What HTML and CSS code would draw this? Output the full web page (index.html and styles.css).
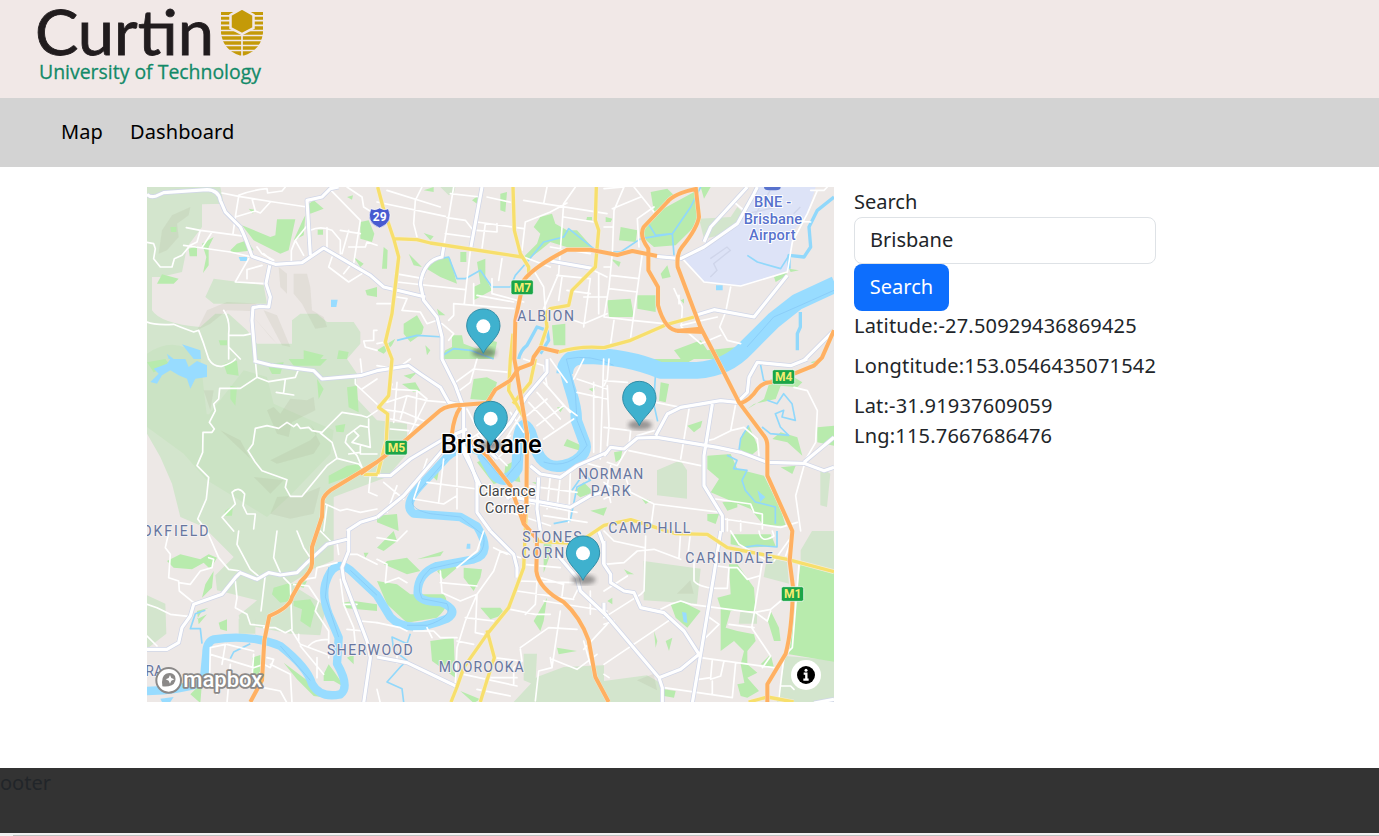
FILE: index.html
```html
<!DOCTYPE html>
<html lang="en">
<head>
<meta charset="utf-8">
<title>Map</title>
<link rel="stylesheet" href="styles.css">
</head>
<body>
<header class="brand">
<svg class="logo" viewBox="0 0 240 90" role="img" aria-label="Curtin University of Technology">
<text class="logo-name" x="3" y="55" textLength="179" lengthAdjust="spacingAndGlyphs">Curtin</text>
<text class="logo-sub" x="7" y="79" textLength="222" lengthAdjust="spacingAndGlyphs">University of Technology</text>
<g class="crest">
<path d="M189 12H231V33Q229 50 212 55.500H208Q191 50 189 33Z"/>
<path class="crest-gap" d="M188 15.800H232M188 20.600H232M188 25.400H232M188 30.500H232M188 35.500H232M188 40.500H232M188 45.500H232M188 50.500H232M210 32V56"/>
<path class="crest-hex" d="M210 8.500L221.500 15V28L210 34L198.500 28V15Z"/>
</g>
</svg>
</header>
<nav class="menu"><a>Map</a><a>Dashboard</a></nav>
<main class="content">
<svg class="map" viewBox="0 0 2061 1545">
<defs>
<g id="major">
<path d="M0 22Q10 32 25 28L50 17 180 8Q215 10 220 40L235 75 280 120Q295 150 315 208L385 232 465 227 530 183 610 230 670 265 710 300 835 330"/>
<path d="M368 235L357 290 370 330 365 360 340 358 318 362 315 400 325 521M490 205L480 40 525 30 550 5 575 0"/>
<path d="M1005 0L970 190M890 180L885 210Q830 220 820 290L830 340 870 390 885 450 885 516 925 596 945 650M1210 222L1340 245"/>
<g transform="translate(1371 0)"><path d="M155 208L230 215 300 180 400 110 450 20 460 0M300 165L320 120 430 0M275 385L330 368 450 390 550 265M600 520L690 430"/></g>
<g transform="translate(0 516)"><path d="M320 5L370 18 500 35 525 60 640 50 690 35 785 20 820 45 880 85 905 130 950 140 950 260 970 310 990 370 990 460 1030 516M600 516L640 490 690 475"/></g>
<g transform="translate(690 516)"><path d="M0 350H40L100 300 200 240 270 210M0 475L80 410 200 270M460 320L490 345 550 355 600 320 690 280M510 0V40L450 110 400 190 330 270 360 300M385 410L580 445 640 410 690 395M485 355L480 450 490 516M235 230L310 380M390 420L420 390"/></g>
<g transform="translate(1371 516)"><path d="M0 290L20 265 60 270 100 237 160 235 340 265 410 280 490 310 600 313 660 335 690 325M155 230L190 165 230 145 350 125 400 130 430 100 435 55 460 10 560 20 610 0M325 135L300 290V380L355 470V520M600 310L690 235"/></g>
<g transform="translate(0 1032)"><path d="M0 355H60L95 335 105 290 130 255 140 220 225 190 265 140 280 125 330 145 365 125 400 132 450 125 480 95 540 40 600 25M605 0V60L585 110 590 145 660 330 670 380 650 516"/></g>
<g transform="translate(690 1032)"><path d="M340 0L410 70 420 110V140M0 378L90 395 230 462 245 470M540 70L600 140 610 180 690 255M665 0L680 40V100"/></g>
<g transform="translate(1371 1032)"><path d="M350 0L330 130 290 370 265 516M0 30V100L20 130V155L60 180 90 185 110 230 180 245 240 300 285 370 230 415 165 440M0 245L165 440 175 470V516M0 215V245M630 516L690 505"/></g>
</g>
<g id="yellow">
<path d="M692 0L708 60 740 155 810 158 850 168 1125 210M740 155L755 210 735 380 715 465 735 516 725 626 695 661 722 681 718 760 692 861M1098 0L1102 130 1120 200 1145 240V270M1348 0L1345 100 1355 130 1345 240 1275 310 1265 355 1210 365 1195 380 1200 420 1180 480M1235 495Q1300 475 1371 482L1451 460 1561 412 1641 390M1098 440L1090 516 1085 610 1130 690M1165 516L1150 586 1098 650M650 862H692"/>
<path d="M1142 740L1138 960 1130 1142 1085 1262 1020 1342 950 1442 930 1500 912 1545M1020 1330L1042 1412 1020 1480 1000 1545M1160 1062L1290 1070 1371 1015 1451 998 1586 1040 1681 1042 1741 1082 1921 1117 2061 1154M1805 1545L1861 1530 1940 1545"/>
</g>
<g id="orange">
<path d="M310 1545L345 1480 352 1360 367 1287Q430 1260 435 1230L460 1185Q495 1150 495 1130V1080L525 990 527 940Q530 925 550 910L690 825M640 861L690 825 715 806 780 756 880 670Q900 654 950 653L1020 648 1045 608 1090 580 1115 545 1155 530 1160 510 1180 482 1235 495M940 661Q920 690 915 740"/>
<path d="M1138 960L1140 740 1130 680 1110 560 1102 516 1105 400 1130 280Q1160 240 1260 188L1330 188 1411 204 1456 192 1530 207M965 756L1020 806 1090 896 1130 1010 1150 1032M1138 950L1130 1010 1170 1056 1168 1152Q1175 1205 1250 1245Q1300 1290 1325 1360L1345 1470 1385 1545"/>
<path d="M1646 0L1656 90Q1650 125 1605 180Q1588 200 1592 240L1660 420 1710 516 1776 646 1850 745Q1862 760 1861 780V866L1936 1032 1928 1122 1938 1200Q1935 1330 1916 1400L1861 1492V1545M1651 5Q1580 20 1561 45L1490 120Q1475 145 1504 185V250L1533 300V355Q1555 435 1600 432L1671 435M1590 432L1660 425M1776 651Q1810 640 1831 606Q1850 585 1871 586L1951 556 2001 536 2025 512 2061 430"/>
</g>
<g id="pin">
<ellipse class="pin-shadow" cx="2" cy="-2" rx="36" ry="15"/>
<path class="pin-body" d="M0 0C-10-25-50-49-50-82C-50-113-27-133 0-133S50-113 50-82C50-49 10-25 0 0Z"/>
<circle class="pin-dot" cx="0" cy="-81" r="21"/>
</g>
<filter id="soft"><feGaussianBlur stdDeviation="7"/></filter>
</defs>
<rect class="land" width="2061" height="1545"/>
<g class="hill">
<path d="M0 0H220L230 50 165 52V120L120 180 105 255 40 270H15V370Q40 410 160 420L205 380 245 380 300 430 330 470H435V400L460 380H510L540 405H620L640 435V470L600 516 630 560 625 630 690 700 780 710V800L720 870 560 930 560 1120 500 1145 430 1190 540 1260 530 1290 520 1345 430 1340 280 1310 275 1285 330 1240 210 1210 205 1165 260 1110 170 1020 100 990 75 890 40 810 0 740V516 280Z"/>
<path d="M200 275L350 295 360 350 200 350 175 330ZM0 1225L55 1250 58 1340 0 1385ZM275 1295H325V1340H275ZM1656 95L1751 90 1771 60 1791 80 1741 140 1671 155ZM1490 1122L1661 1145 1650 1250 1490 1240ZM1530 850L1600 820 1620 850V935L1530 925ZM1961 1090L1995 1032H2061V1154L1961 1135ZM1371 1482L1500 1465 1545 1490 1545 1545H1371ZM1100 1545L1170 1470 1250 1440 1371 1435V1545ZM1860 1110L1920 1125 1926 1190 1850 1170ZM1916 1407L2061 1420V1545H1890ZM1130 1400L1170 1400 1165 1495 1130 1480ZM880 0H925L920 20 905 25ZM1780 1275H1830V1310H1775ZM2020 840L2050 860 2040 960 2020 955Z"/>
</g>
<path class="forest" d="M0 500Q90 440 160 516L180 690 290 550 360 570 380 650 560 730 550 800 430 925 360 990 180 880 110 800 0 720ZM170 680L320 700 310 790 430 930 250 900 160 850Z"/>
<path class="shade" d="M35 200L45 130 75 85 130 60 125 85 90 110 95 150 60 190ZM150 430L180 370 240 345 330 350 310 372 240 370 190 410ZM440 260H480L490 300 495 370 530 390 540 420 505 425 465 350 440 320ZM350 370L390 385 430 480 405 475 360 390ZM320 390L390 470 370 450ZM395 240L420 260 420 320 400 300ZM360 670L380 660 400 680 430 635 480 640 500 630 505 670 435 705 425 750 390 740ZM220 730L280 760 310 815ZM370 820L490 760 510 740 490 710 520 770 500 800 390 830ZM320 870L410 880 370 920ZM390 930L460 925 520 900 500 980 430 995 370 980ZM1971 1300L2030 1320 2061 1350 1990 1345ZM1590 1220L1630 1180 1640 1220ZM1470 1480L1520 1460 1530 1510ZM170 610L200 610 190 670Z"/>
<path class="airport" d="M1611 215L1691 165 1771 105 1826 20V0H2006L1981 80 1941 130 1926 250 1781 297 1671 285Z"/>
<path class="runway" d="M1690 215L1740 180 1750 190 1700 230 1710 250 1690 270M1820 90L1870 10M1800 80L1890 60M1940 80L1960 60"/>
<g class="park">
<path d="M390 97H445L440 120 425 190 400 200 320 160 285 115 370 150 385 145ZM480 55L500 40 530 65 490 80ZM640 105L665 100 682 140 675 165 640 155ZM250 190L270 170 300 160 320 190 255 197ZM125 185L150 178V208H128ZM30 290L45 262 95 275 80 290ZM655 310L690 300V330L660 325ZM620 210L650 230 640 240ZM70 120H88V135H72ZM305 65L322 68 318 80ZM165 170L200 150 185 180 185 235 168 258 178 210ZM215 460L240 460 240 475H220ZM467 100L475 85 470 145 440 160ZM512 128H528V143H512ZM600 30L618 25 615 38ZM575 490L605 495 600 516H570ZM470 490L530 505 520 516H470Z"/>
<g transform="translate(690 0)"><path d="M370 20L390 15 385 75 370 70ZM470 120L490 90 525 80 535 110 570 130 600 130 650 185 600 190 520 165 490 190 450 220 440 210 480 170 490 140ZM300 225L325 215V270L345 310 290 340V300L310 290ZM80 410L120 385 140 420 135 440 100 465 80 440ZM95 200L135 240 110 235ZM525 415L565 410V475H530ZM190 516L205 490 225 480 225 445 255 445 260 470 300 485 340 460 360 465 350 516ZM20 180L32 190 30 245 15 245ZM140 240L190 205 220 215 240 290 190 270ZM140 10L170 0V15ZM285 40L305 25 300 50ZM140 138L170 148 160 160ZM250 195L268 195V225H250ZM180 365L205 385 185 385ZM0 490L55 455 45 475 20 500ZM145 475L160 490 150 505ZM630 90H645V100H628Z"/></g>
<g transform="translate(1371 0)"><path d="M110 130L160 75 270 15 285 50 280 110 215 175 150 180 115 150ZM140 15L190 5 210 25 150 75ZM50 120L100 130 95 165 45 160ZM170 260L190 235 200 270 175 275ZM10 340L80 335 90 390 15 390ZM100 325H155V375L100 365ZM210 490L290 460 310 490 400 480 420 490 400 516H230ZM510 270L545 255 550 265 515 285ZM555 245L585 250 560 255ZM290 0H320L300 35ZM20 215L50 225 45 240ZM5 90L25 95 20 105H5ZM230 340L240 335V350Z"/></g>
<g transform="translate(0 516)"><path d="M230 15L270 5 275 50 240 45ZM360 15L410 10 400 45 375 45ZM0 10L55 0 70 20 20 40ZM600 85L630 80 635 160 605 145ZM565 200L595 195 590 220 568 218ZM545 350L600 320 640 315 640 340 545 375ZM425 0H540L520 20H440ZM510 60L530 90 515 120ZM250 80L270 85 265 140 250 120ZM235 455L258 440 255 470H230Z"/></g>
<g transform="translate(690 516)"><path d="M290 60L330 55 360 70 345 125 280 120ZM75 75L115 70 130 95 110 100ZM420 300L430 370 380 360 385 320ZM570 240L615 260 610 275 560 260ZM300 310L320 300 370 370 350 375ZM540 145L560 145 550 160ZM465 370L490 370 485 380ZM160 345L185 340 180 365ZM640 455L690 445 680 470ZM0 470L60 465 65 516 0 490ZM590 400L620 370 650 400 610 415ZM80 50L120 40 100 60ZM635 90L655 85 650 100Z"/></g>
<g transform="translate(1371 516)"><path d="M90 0H270Q240 20 200 20ZM170 70L195 75 185 130 165 125ZM430 150L480 120 500 60 570 55 595 70 580 85 530 80 515 120 450 135ZM415 225L435 200 465 270 440 290 405 270ZM530 220L580 235 595 290 550 250 505 240ZM310 290L380 285 400 330 480 350 530 450 545 500 480 500 440 450 390 430 320 400 345 360 310 330ZM640 205L690 200V260L640 250ZM30 280L55 275 50 300 35 310ZM310 465H345L335 495 310 485ZM250 200L295 185 290 205 270 220ZM355 430L400 425V445L370 455ZM40 0H60L50 10ZM530 325L575 320 565 345ZM110 415L140 425 125 435ZM620 10L650 0 640 20Z"/></g>
<g transform="translate(0 1032)"><path d="M60 90L100 70 160 85 185 70 210 80 190 115 170 95 135 115 80 110ZM380 170L430 155 430 210 400 215 375 190ZM440 210L490 205 505 230 490 290 460 270 465 235 440 225ZM430 160L480 150 470 170ZM530 430L545 400 560 420 595 470 560 450 530 450ZM315 380L340 372 340 420 320 445ZM410 395L510 470 540 500 500 495 450 445ZM155 280L180 250 150 265 165 240 185 230 150 240ZM215 275L240 265V300L220 295ZM585 215L620 210 690 220V240L600 232ZM650 65L665 65 655 80ZM175 160L200 120 195 170 165 200ZM130 490L165 455 160 516ZM600 380L620 370V400Z"/></g>
<g transform="translate(690 1032)"><path d="M0 150L60 160 100 190 200 190Q225 220 180 260L90 275 30 220ZM30 90L90 80 130 120 90 130 45 110 20 100ZM180 120L220 100 240 110 200 145ZM260 110L315 115 310 140 290 180 260 140ZM160 330L230 320 235 440 165 390ZM310 230L370 230 385 250 340 265ZM470 270L510 200 500 270 490 300ZM500 40L525 30 520 70 500 125ZM0 50L50 0 60 30 20 60ZM540 350L600 360 545 370ZM120 85L200 60 190 75ZM250 480L310 505 290 516Z"/></g>
<g transform="translate(1371 1032)"><path d="M590 95L690 120V392L555 370ZM340 200L380 190 375 100 400 100 450 170 455 240 380 240 365 290 400 300 450 310 455 330 430 360 430 400 460 425 430 440 465 480 430 500 410 400 420 360 390 330 350 360V230ZM200 220L230 210 290 240 250 290 215 260ZM380 10H500L515 45 430 50 380 40ZM500 240L525 290 530 330 510 330 490 265ZM150 300L155 350 160 330ZM185 330L205 320 195 360ZM180 475L215 480 210 500 180 495ZM60 115L90 130 70 130ZM10 210L25 200V220ZM470 400L500 370 510 410ZM400 460L425 455 430 500 410 495Z"/></g>
</g>
<g class="lake">
<path d="M275 210H300V222H280ZM552 338H572L568 360H552ZM105 472L160 490 162 516H140ZM60 500L80 516H65ZM10 585L35 560 20 545 60 530 70 516H115L125 540 150 522 180 535V570L145 575 130 605 120 575 95 565 70 550 45 565 30 590ZM1707 295H1727V310H1707ZM1605 1275L1618 1277 1621 1308 1610 1305ZM1831 910L1855 930 1840 945ZM960 1070H970V1085H958ZM40 1535L80 1530 70 1545H45Z"/>
</g>
<g class="creek">
<path d="M880 215L905 210 930 275 955 275 1000 250 1035 300H1090L1105 265 1140 225 1190 165 1250 150 1265 125 1340 185M750 460L810 445 890 450M880 510L920 485 970 490 1040 516M1661 0L1631 60 1576 140 1581 205M1501 105L1526 145 1576 140 1481 155 1421 195H1371M1525 570L1520 650 1532 703"/>
<path class="wide" d="M1926 245L1926 205 1971 210 1991 180 1986 120 2011 70 2061 30M1115 516Q1120 490 1140 475L1170 420 1200 430 1205 460 1180 500M1960 375V420L1951 440 1951 490"/>
<path d="M1801 205L1831 225 1901 245 1926 205M1805 715L1781 755 1776 790M1740 805L1770 820 1760 845 1800 850 1785 880 1795 910 1825 945 1885 960 1885 1010M1861 640L1890 650 1910 620 1935 650 1945 700 1905 690 1910 670 1885 680 1900 720 1925 745 1870 740 1845 720M1840 530L1850 580 1880 590M790 1340L780 1370 735 1350 740 1390 780 1420 760 1440 720 1485 765 1505 770 1545M165 1370L160 1325 130 1325 145 1280 175 1270M250 1415L260 1395 310 1370M1795 1080L1830 1075 1890 1080 1890 1032M1275 910L1310 860 1330 880 1290 900 1270 1000 1220 1010"/>
</g>
<g class="river">
<path class="estuary" d="M2065 292L1950 345 1880 400 1800 480Q1740 545 1650 550L1540 550Q1440 508 1310 506Q1255 510 1253 560"/>
<path class="reach" d="M1253 535C1260 600 1290 640 1288 700L1310 760Q1330 800 1270 830Q1190 860 1165 780L1150 735Q1125 690 1115 750L1110 845Q1080 900 1040 860L1005 800"/>
<path class="stream" d="M1030 850L1005 800Q960 760 900 810L845 870Q760 950 800 980L940 990 990 1018Q1040 1100 980 1117L870 1137Q810 1160 812 1220Q820 1245 880 1245Q940 1270 900 1295Q780 1345 730 1290L690 1225 610 1150Q560 1110 535 1190Q525 1230 545 1282L575 1352 570 1430Q610 1500 580 1522Q520 1535 495 1490Q480 1440 400 1377Q310 1340 200 1357Q178 1365 178 1400L170 1485Q100 1510 0 1512"/>
<path class="channel" d="M2061 310L1960 355 1880 390 1800 480M1400 535Q1330 500 1258 516L1285 620 1290 700 1320 775Q1270 850 1190 825M1145 730Q1125 750 1120 820L1070 880 1000 800M900 815L800 930Q780 965 850 980L940 990 1010 1045Q1020 1110 950 1122L850 1145Q800 1190 825 1235L900 1250Q920 1290 840 1315L780 1315M690 1225L610 1150M545 1140L535 1230 575 1350M490 1480L400 1377"/>
</g>
<g class="minor">
<path d="M118 122L160 130 295 148M110 175L145 180 250 195 315 210M160 130L150 165 130 175 105 205 82 215 75 240H40L20 215 25 185 20 170 0 166M195 135L165 182M225 18L275 28 380 45 480 60M275 28L265 90 258 140M315 35L325 72 340 78 370 45M265 90L325 72M275 25Q310 10 360 5L362 18 405 12 415 0M550 8L640 100M600 0L645 30 650 60 690 85M485 110L445 160 470 205M445 160L433 190V222M490 130Q520 115 555 130L580 160V200M540 122V185M555 210L545 240 605 285 645 260M605 130L585 200M640 100L620 230M580 130L640 140M605 180H655L660 165 690 175M350 200L385 230M330 180L345 200 380 220M610 235L590 260M305 215L265 285 355 290M345 235L300 248V275M0 405Q20 415 80 412L100 420 140 435 155 430 170 470 185 516M230 370Q250 400 245 440V516M247 445L290 445 315 440M245 480L280 516M690 430H680V460L650 462 655 480 690 490"/>
<g transform="translate(690 0)"><path d="M0 45L205 88M30 10L190 60M135 0L115 40 110 110 120 150M230 0L200 180M330 30L410 48M210 92L265 100 285 125M205 140L280 150M300 105L440 125M325 110L315 185M360 110V135L300 130M440 40L500 50 690 80M445 105L435 190M445 105L520 75 570 48M595 0L560 50 545 260 500 365M560 90L650 105M520 180L640 200M375 215L365 280M280 190L262 350M345 275V320L440 345M55 260L140 275M60 285L265 308M300 325L410 345M230 350L410 365M230 350V385L215 400M290 290V350M60 330L90 335 75 370 130 375 150 410 180 400M195 410L230 440 215 460M540 265L640 275M640 245L690 270M665 260V380M640 275L620 420M555 270L545 340M620 330H690M590 400L620 410 690 380M470 250L500 300 505 370M0 350H45M0 470L25 465M440 210L520 240M570 310L640 320M220 20L310 30M510 0L500 50"/></g>
<g transform="translate(1371 0)"><path d="M60 0L30 70 25 200 15 300 0 390M0 5L60 0M90 0L150 75M150 60L100 95 105 180M25 65L110 30M0 120H25M0 240H20M20 265L105 275M115 200L80 450M15 305L100 315M0 390L85 400 180 410M30 400L20 470M240 220L300 285 410 297 550 255 565 165 610 80 640 10M210 305L235 360 232 420 290 470 350 445M380 300L365 375 347 420 370 460 410 470M230 415L340 390M570 100L620 105M620 10H660L670 0M390 45L425 75M225 325V350"/></g>
<g transform="translate(0 516)"><path d="M185 0Q200 25 225 22Q260 10 265 0M325 5L330 55 365 68 445 55 455 30M415 60L410 100M388 100L440 108M330 55L280 88H218L215 120 200 135 205 155 187 190 202 210 195 220H168L167 280 150 320 185 355 178 420 152 480 180 516M625 60V75L690 135M645 90L690 60M640 0L645 45M690 155L660 175 645 170 585 160 550 195 525 220 495 215 485 205 460 208 450 195 440 203 420 190 395 208 360 200 325 208 318 255 303 275 325 310 345 335 420 362 415 385 430 412H465L540 320 570 298 555 250 520 222M570 298L635 315 645 325 630 290 595 250 600 230 640 200 665 205V180M620 215L635 230 615 250 670 265 665 205M640 260V285H690M605 285L640 280M535 435L580 455 600 450 640 460 690 450M670 350L665 400 690 410M255 400Q275 380 293 405L288 440 300 465H325L320 510M255 400L265 435 225 475 260 516M540 440L530 516"/></g>
<g transform="translate(690 516)"><path d="M45 75L30 130 90 110 150 125 210 130M35 90L120 95 150 120 90 240M10 150L80 160 150 190M40 180L130 200M40 210L95 215M60 70L50 190M90 110L70 180M120 95L115 190M0 20L60 30 100 0M235 70L290 30 400 40M240 100L280 70 300 0M440 0L500 20 510 80 560 140 600 170M455 130L530 210M480 100L550 180M500 70L580 160M450 170L510 120M480 200L560 140M500 240L590 180M520 0L570 70M270 150L350 300M280 240L340 200M340 290L400 230M360 300L420 240M380 250L430 170M300 230L390 320M400 160L440 220M150 300L110 420 200 435 240 410M150 370L300 390M200 300L185 430M240 280L240 450M20 370L80 420M60 380L30 460M460 420L580 440M450 430L600 460M450 380L600 400M520 350L510 450M550 350L540 450M580 340L575 490M500 470L630 490M600 100L690 120M620 0L590 60M650 70V280M620 310L690 330M600 60L690 90M680 0L670 300M400 460L520 500"/></g>
<g transform="translate(1371 516)"><path d="M15 0L10 60 0 80M0 65L70 70M10 80L15 200 10 260M0 205L80 215 75 260M155 130L230 145M255 150L230 300M395 135L380 215 330 240 310 245M380 215L420 205 460 240 465 290M75 260L40 320 10 310M75 275L290 320M20 320L10 380 20 430M60 340L80 400 150 435 350 460M150 435L140 510M40 400L0 420M570 85L610 95 640 155 635 250 600 310M600 320L575 410 590 516M335 420L440 435 450 460 475 465V510M370 480V516M410 485V516M360 480L530 505 580 490M0 370L40 400M100 230L150 215"/></g>
<g transform="translate(0 1032)"><path d="M180 0L215 80 245 115 280 120M275 0L270 40 310 115 340 140M355 130L342 240M390 0L380 80 400 125M450 0L470 50 490 80M520 0L550 30M65 5L55 50 70 70 65 140 95 150 97 180 140 215M95 155L130 160 160 120 195 110 200 85 185 80M0 220L30 230 70 250 130 257M265 150L270 200 265 230 300 250 310 280 355 285M350 290L385 290 415 305 435 295 430 160 410 140M440 160L485 165 515 210 505 240 545 300 545 380M470 145L505 140 510 110 570 95M600 30V70H630L690 100M570 35L575 70M435 300L460 340 540 370M485 345Q500 325 545 325M455 310V330M460 345L530 430M240 340L320 360M190 350L235 340 225 400M190 370L320 410 350 400M190 350L188 440 230 455M320 370L315 440M350 400L370 410 380 385 360 380M370 400L430 430 435 516M350 470L400 480 420 516M250 400L240 516M580 145L590 220 620 290 625 340M590 220L630 220M640 270L690 275M600 295L650 300M640 340L690 350M0 315L30 345M200 460L210 490M510 380V440"/></g>
<g transform="translate(690 1032)"><path d="M0 20L60 30 90 0M0 85L30 100 25 155M25 155L65 140 90 155M190 120L195 185 250 210 300 190M370 60L350 120 300 190 265 270 240 350 235 460M190 155L300 165M370 60L430 80M320 0L300 60 240 110M0 275L70 290 90 300M110 300H170L190 320H240M300 190L295 305 320 310M265 260L350 270M240 330L290 340M425 150L590 155M420 180L590 205M560 155L555 195M480 150L475 220 445 250M400 235L475 250 520 250M500 210L690 240M550 240L525 410M525 385L600 415 660 370M430 350L515 290 600 295M430 355L435 390 410 410V460M350 380L430 390M520 380L525 410 485 420 475 510M260 430L420 465M300 475L400 495M0 475L10 516M440 100L550 110M615 150L590 200M640 180V250M620 355L690 280M640 400L620 330M150 290L165 320M60 370V395M330 440L420 440M390 70L350 50M490 140L560 160"/></g>
<g transform="translate(1371 1032)"><path d="M0 100L60 95 100 60 150 55 230 85M125 15L120 180 110 190 0 260M0 180L70 135M230 0L225 80M260 0L250 85M270 85V150Q290 175 370 172L375 110 340 105M375 110L400 110 430 145 465 135M380 0L405 40 490 90M465 0Q470 40 510 15L505 0M475 90L450 250 443 290 500 375 475 410M170 235L200 220 230 210 260 220 450 245 500 235 530 210M455 245L490 270 500 240M375 280L450 290M310 255L345 280 305 320M200 265L0 400M290 380L510 410M325 385L320 440 285 445M360 390L350 435 320 445M395 395L385 500M325 450V490M180 470L385 500M585 100L565 350 540 375 525 500M530 465H560L570 475M545 75L560 30M0 430L15 440M0 0L30 30 120 50M510 90L560 20M0 280L30 270"/></g>
</g>
<use class="major-casing" href="#major"/><use class="major" href="#major"/>
<use class="casing" href="#yellow"/><use class="yellow" href="#yellow"/>
<use class="casing" href="#orange"/><use class="orange" href="#orange"/>
<g class="suburb">
<text x="1111" y="402" textLength="170">ALBION</text>
<text x="-15" y="1046" textLength="199">OKFIELD</text>
<text x="1293" y="877" textLength="196">NORMAN</text>
<text x="1331" y="926" textLength="120">PARK</text>
<text x="1384" y="1039" textLength="246">CAMP HILL</text>
<text x="1126" y="1065" textLength="178">STONES</text>
<text x="1123" y="1114" textLength="190">CORNER</text>
<text x="1615" y="1129" textLength="262">CARINDALE</text>
<text x="540" y="1405" textLength="257">SHERWOOD</text>
<text x="875" y="1455" textLength="255">MOOROOKA</text>
<text x="-5" y="1466">RA</text>
</g>
<g class="airport-name"><path d="M1851 0H1901Q1901 10 1886 10H1866Q1851 10 1851 0Z"/><text x="1821" y="60" textLength="112">BNE -</text><text x="1790" y="110" textLength="175">Brisbane</text><text x="1806" y="158" textLength="140">Airport</text></g>
<g class="locality"><text x="995" y="928" textLength="171">Clarence</text><text x="1014" y="977" textLength="133">Corner</text></g>
<text class="city" x="881" y="798" textLength="303" lengthAdjust="spacingAndGlyphs">Brisbane</text>
<g class="shield"><rect x="1092" y="279" width="67" height="44" rx="6"/><rect x="714" y="760" width="67" height="44" rx="6"/><rect x="1876" y="548" width="67" height="44" rx="6"/><rect x="1903" y="1199" width="67" height="44" rx="6"/></g>
<g class="shield-text"><text x="1126" y="314">M7</text><text x="748" y="795">M5</text><text x="1910" y="583">M4</text><text x="1937" y="1233">M1</text></g>
<path class="route" d="M672 65Q684 72 698 63Q712 72 724 65Q742 105 698 123Q654 105 672 65Z"/><text class="route-text" x="698" y="103">29</text>
<use href="#pin" x="1009" y="499"/><use href="#pin" x="1031" y="776"/><use href="#pin" x="1477" y="716"/><use href="#pin" x="1308" y="1180"/>
<g class="mapbox"><circle class="ring" cx="65" cy="1480" r="37"/><path class="mark" d="M46 1498Q42 1467 57 1460Q75 1453 84 1467Q90 1486 74 1495Q62 1500 46 1498Z"/><path class="star" d="M69 1464L73 1473 82 1477 73 1481 69 1490 65 1481 56 1477 65 1473Z"/><text x="109" y="1499" textLength="237" lengthAdjust="spacingAndGlyphs">mapbox</text></g>
<g class="info"><circle class="info-bg" cx="1977" cy="1464" r="45"/><circle cx="1977" cy="1464" r="27"/><path d="M1970 1460H1978V1478M1969 1478H1985"/><circle class="info-dot" cx="1977" cy="1450" r="4.500"/></g>
</svg>
<section class="panel">
<label for="place">Search</label>
<input id="place" class="field" value="Brisbane">
<button class="go">Search</button>
<p>Latitude:-27.50929436869425</p>
<p>Longtitude:153.0546435071542</p>
<div class="point">Lat:-31.91937609059</div>
<div class="point">Lng:115.7667686476</div>
</section>
</main>
<footer class="footer">ooter</footer>
<div class="track"><div class="thumb"></div></div>
</body>
</html>
```
FILE: styles.css
```css
*{box-sizing:border-box}
body{margin:0;height:836px;display:flex;flex-direction:column;overflow:hidden;font-family:"Noto Sans","Open Sans",sans-serif;font-size:20px;line-height:30px;color:#212529;background:#fff}
.brand{height:98px;flex:none;background:#f1e8e7;padding-left:32px}
.logo{display:block;width:240px;height:90px;overflow:visible}
.logo-name{font:61px Lato,sans-serif;fill:#211c1e;stroke:#211c1e;stroke-width:.8}
.logo-sub{font:20.500px "Open Sans",sans-serif;fill:#128a68;stroke:#128a68;stroke-width:.3}
.crest{fill:#c49a08}
.crest-gap{stroke:#f1e8e7;stroke-width:1.700}
.crest-hex{stroke:#f1e8e7;stroke-width:2.500}
.menu{height:69px;flex:none;background:#d3d3d3;display:flex;gap:27px;padding:19px 0 0 61px;color:#000;letter-spacing:.1px}
.content{height:601px;flex:none;display:flex;gap:20px;padding:20px 0 0 147px;align-items:flex-start}
.map{width:687px;height:515px;flex:none;overflow:hidden;display:block}
.panel{width:302px;display:flex;flex-direction:column;align-items:flex-start;white-space:nowrap}
.panel p{margin:0 0 10px;letter-spacing:.2px}
.point{letter-spacing:.2px}
.field{width:302px;height:47px;border:1px solid #dee2e6;border-radius:8px;padding:0 15px 2px;font:inherit;color:inherit;background:#fff}
.go{width:95px;height:47px;border:0;border-radius:8px;background:#0d6efd;color:#fff;font:inherit;padding:0 0 2px}
.footer{height:65px;flex:none;background:#333}
.track{height:3px;flex:none;background:#f1f1f1;padding:2px 0 0 13px}
.thumb{height:1px;background:#c1c1c1}
.land{fill:#ede8e6}
.hill{fill:#d3e5cd}
.forest{fill:#cbe3c4}
.shade{fill:#9c9a7c;opacity:.13}
.airport{fill:#dde3f7}
.runway{fill:none;stroke:#cfd5ea;stroke-width:4}
.park{fill:#b8ebad}
.lake{fill:#98dcff}
.creek{fill:none;stroke:#91d8fb;stroke-width:5;stroke-linejoin:round}
.creek .wide{stroke-width:10}
.river{fill:none;stroke:#98dcff;stroke-linejoin:round}
.river .estuary{stroke-width:50}
.river .reach{stroke-width:34}
.river .stream{stroke-width:25}
.river .channel{stroke:#83c6f5;stroke-width:2}
.minor{fill:none;stroke:#fff;stroke-width:5;stroke-linejoin:round;stroke-linecap:round}
.major-casing,.major,.casing,.yellow,.orange{fill:none;stroke-linejoin:round}
.major-casing{stroke:#d0d6e8;stroke-width:14}
.major{stroke:#fff;stroke-width:9.500}
.casing{stroke:#f4ecd9;stroke-width:14}
.yellow{stroke:#f7df6c;stroke-width:10}
.orange{stroke:#ffb062;stroke-width:12}
.map text{font-family:Roboto,sans-serif;paint-order:stroke;stroke-linejoin:round}
.suburb{font-size:42px;fill:#66769f;stroke:#f3eff0;stroke-width:6}
.airport-name{font-size:44px;font-weight:500;fill:#5872cd;stroke:#fff;stroke-width:6}
.airport-name path{stroke:none}
.locality{font-size:43px;fill:#444;stroke:#fff;stroke-width:7}
.city{font-size:75px;font-weight:500;fill:#000;stroke:#fff;stroke-width:7}
.shield{fill:#1ba548;stroke:#fff;stroke-width:2}
.shield-text{font-size:36px;font-weight:700;fill:#f5ec72;text-anchor:middle}
.route{fill:#485bd0;stroke:#fff;stroke-width:2}
.route-text{font-size:36px;font-weight:700;fill:#fff;text-anchor:middle}
.pin-shadow{fill:#333;opacity:.45;filter:url(#soft)}
.pin-body{fill:#3fb1ce;stroke:#318da7;stroke-width:3}
.pin-dot{fill:#fff}
.ring{fill:#fff;stroke:#8b8988;stroke-width:6}
.mark{fill:#8b8988}
.star{fill:#fff}
.mapbox text{font-size:66px;font-weight:500;fill:#fff;stroke:#8b8988;stroke-width:11}
.info-bg{fill:#fff}
.info path{fill:none;stroke:#fff;stroke-width:7}
.info .info-dot{fill:#fff}
```
